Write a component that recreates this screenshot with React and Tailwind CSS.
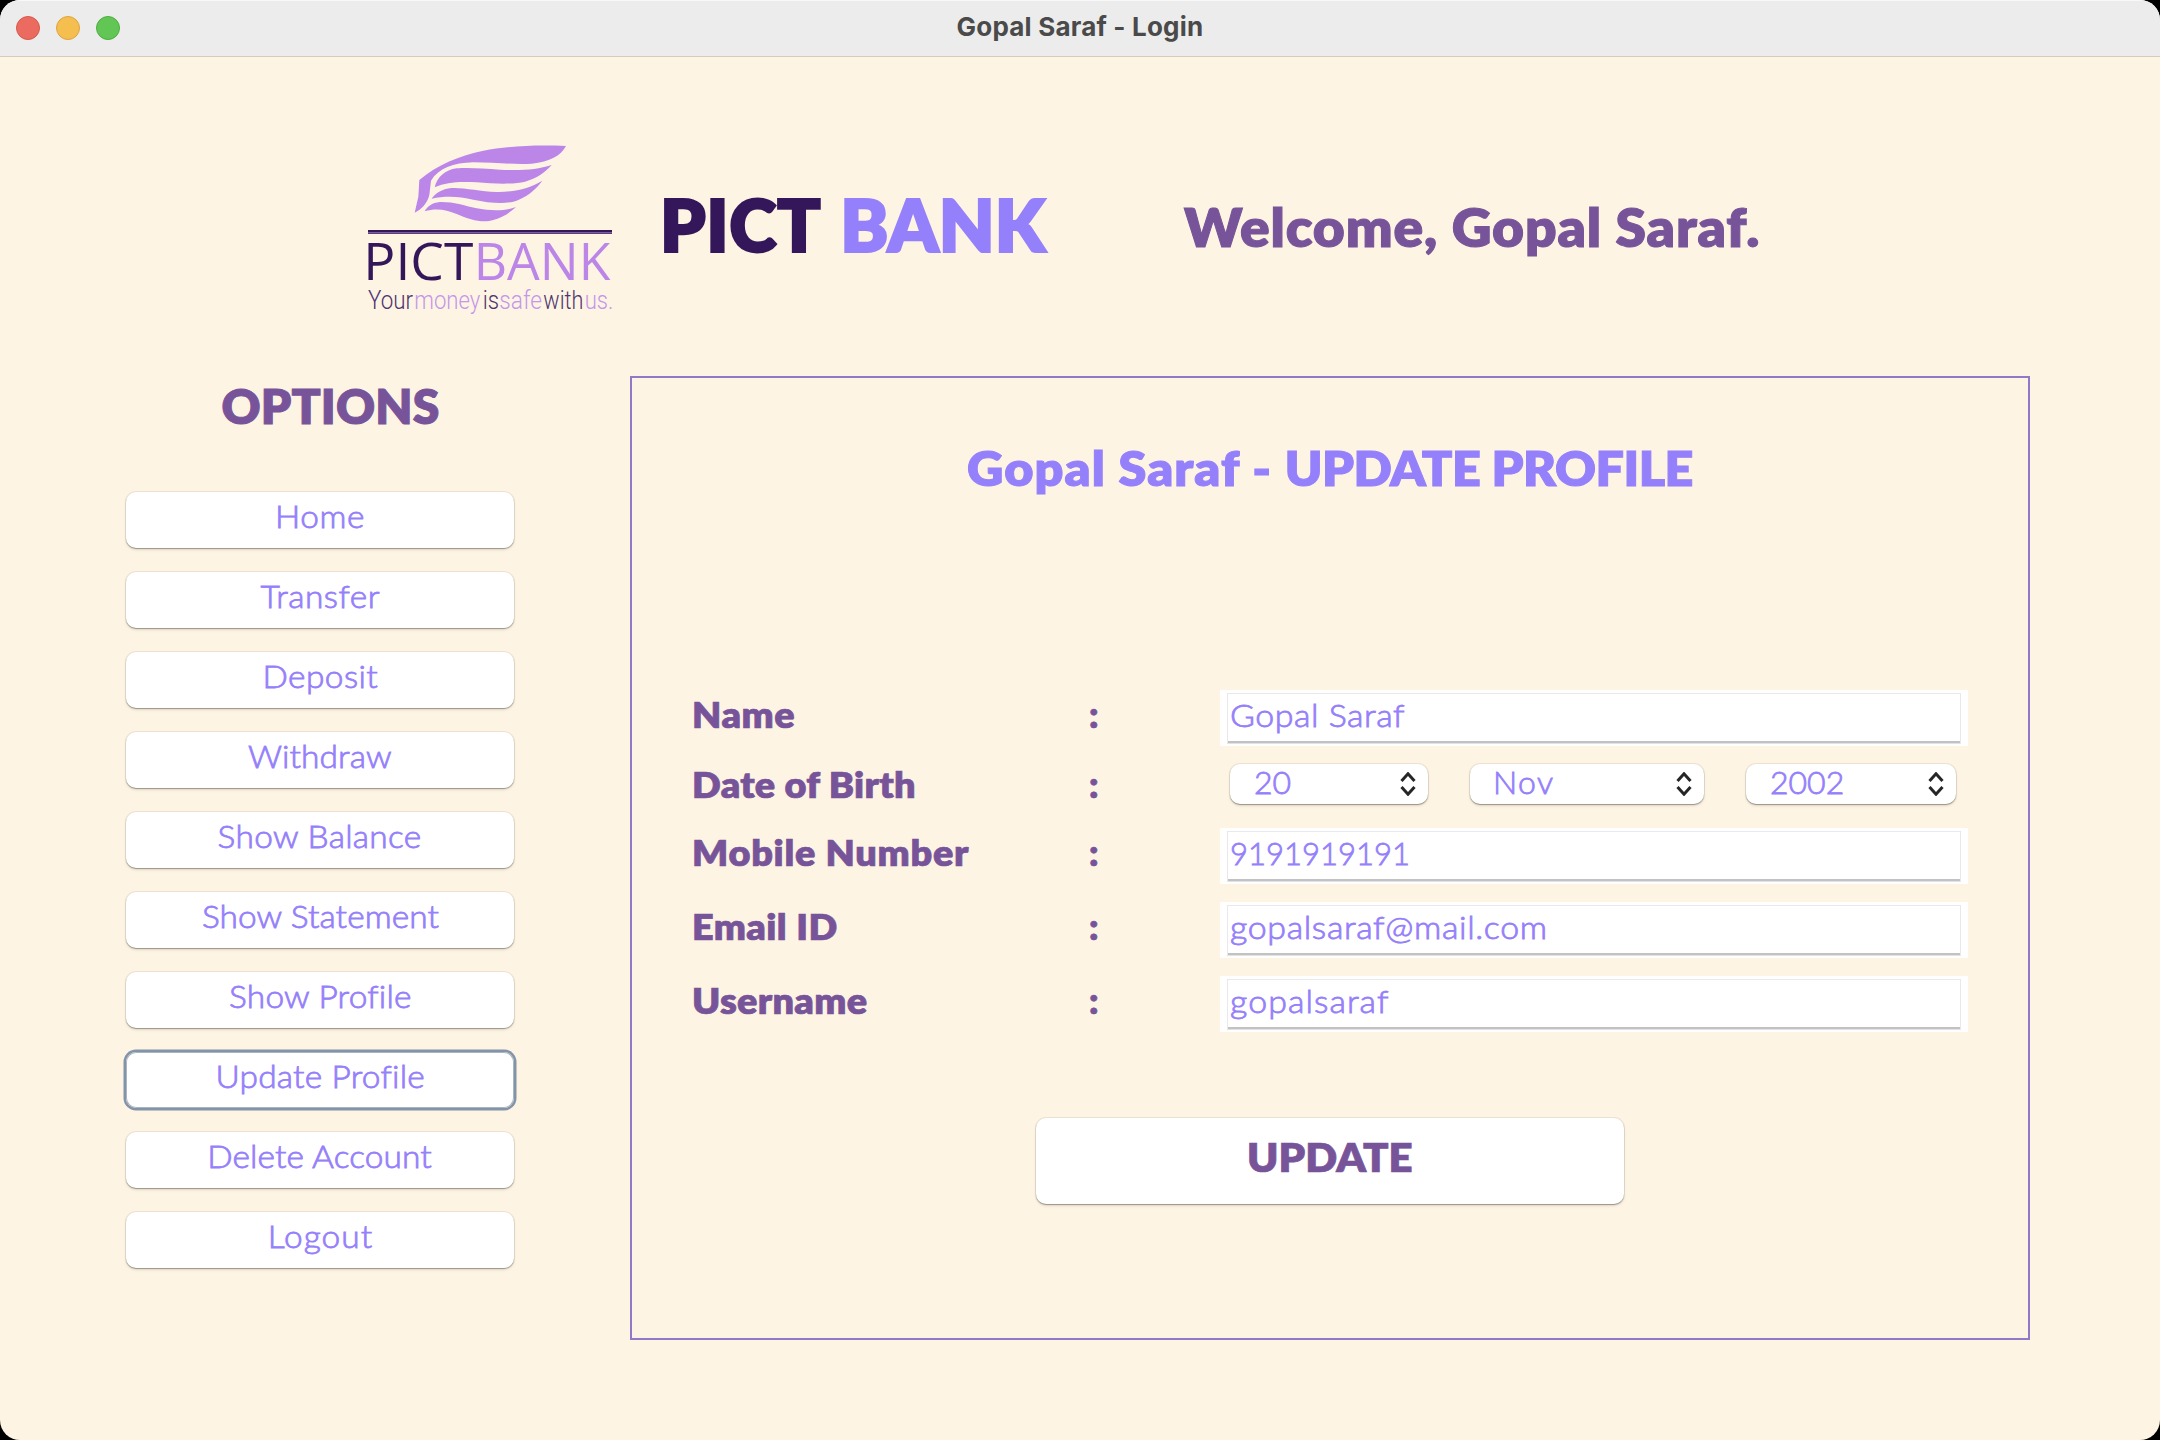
import React from "react";

const OPTIONS = [
  { label: "Home", fit: "tracking-[0.5px]" },
  { label: "Transfer", fit: "tracking-[0.5px]" },
  { label: "Deposit", fit: "tracking-[0.4px]" },
  { label: "Withdraw", fit: "tracking-[0.1px]" },
  { label: "Show Balance", fit: "tracking-[0.3px]" },
  { label: "Show Statement", fit: "tracking-[0.1px]" },
  { label: "Show Profile", fit: "tracking-[0.2px]" },
  { label: "Update Profile", fit: "tracking-[0.2px]", selected: true },
  { label: "Delete Account", fit: "tracking-[0.1px]" },
  { label: "Logout", fit: "tracking-[1px]" },
];

const CONTROL_SHADOW =
  "shadow-[0_0_0_1px_rgba(0,0,0,0.07),0_1px_1px_rgba(0,0,0,0.28),0_2px_3px_rgba(0,0,0,0.1)]";

function TitleBar() {
  return (
    <header className="grid h-[57px] grid-cols-[1fr_auto_1fr] items-center border-t border-b border-t-[#f8f8f8] border-b-[#d6cbb9] bg-[#ececec] px-4 pb-px">
      <div className="flex gap-4">
        <span className="size-6 rounded-full border border-[#d8574c] bg-[#ec6b60]" />
        <span className="size-6 rounded-full border border-[#dba43f] bg-[#f5bf4f]" />
        <span className="size-6 rounded-full border border-[#4fac40] bg-[#62c655]" />
      </div>
      <h1 className="-mt-[2px] font-['Inter',sans-serif] text-[26px] leading-none font-bold tracking-[0.2px] text-[#4a4a4a]">
        Gopal Saraf - Login
      </h1>
      <div />
    </header>
  );
}

function Logo() {
  return (
    <svg viewBox="0 0 840 600" className="h-[200px] w-[280px] shrink-0">
      <g fill="#bb86e8">
        <path d="M648 48C560 44 470 48 400 62C330 76 260 105 208 150L205 200L194 248C215 238 232 220 238 195L243 152C265 116 310 98 370 97C430 97 490 104 545 101C600 95 632 78 648 48Z" />
        <path d="M605 105C560 120 510 122 450 119C400 115 350 112 320 115C285 120 262 140 254 172C290 155 330 154 380 157C430 161 490 164 525 155C560 145 585 128 605 105Z" />
        <path d="M577 152C540 175 490 187 440 186C390 184 340 172 305 174C275 177 255 190 245 206C290 196 330 200 370 209C420 219 470 225 505 210C540 194 560 175 577 152Z" />
        <path d="M498 231C460 245 420 242 380 235C340 226 310 215 270 216C245 218 232 230 224 244C260 233 290 240 320 252C360 270 400 280 430 270C460 262 480 247 498 231Z" />
      </g>
      <rect x="54" y="300" width="732" height="7" fill="#34175a" />
      <rect x="54" y="307" width="732" height="5" fill="#5b3d80" />
      <g fontFamily="'Open Sans', sans-serif" fontSize="156" fontWeight="400">
        <text x="40" y="449" fill="#34175a" textLength="330" lengthAdjust="spacingAndGlyphs">PICT</text>
        <text x="371" y="449" fill="#bb86e8" textLength="410" lengthAdjust="spacingAndGlyphs">BANK</text>
      </g>
      <g fontFamily="Roboto, sans-serif" fontSize="76" fontWeight="300">
        <g fill="#4d3570">
          <text x="54" y="536" textLength="135" lengthAdjust="spacingAndGlyphs">Your</text>
          <text x="398" y="536" textLength="49" lengthAdjust="spacingAndGlyphs">is</text>
          <text x="580" y="536" textLength="120" lengthAdjust="spacingAndGlyphs">with</text>
        </g>
        <g fill="#c497ea">
          <text x="193" y="536" textLength="198" lengthAdjust="spacingAndGlyphs">money</text>
          <text x="448" y="536" textLength="128" lengthAdjust="spacingAndGlyphs">safe</text>
          <text x="704" y="536" textLength="86" lengthAdjust="spacingAndGlyphs">us.</text>
        </g>
      </g>
    </svg>
  );
}

function OptionButton({ label, fit, selected }) {
  return (
    <button
      className={
        "flex h-14 w-[388px] justify-center rounded-[10px] bg-white pt-[8px] text-[32px] leading-none font-light text-[#9580fb] [-webkit-text-stroke:0.8px_#9580fb] " +
        (selected ? "shadow-[0_0_0_2.5px_#8494a8,inset_0_0_0_1px_#a9b4c2]" : CONTROL_SHADOW)
      }
    >
      <span className={"inline-block scale-x-[1.045] " + fit}>{label}</span>
    </button>
  );
}

function Row({ label, className, fit, children }) {
  return (
    <div className={"flex " + className}>
      <div className="w-[397px] pt-[6px]">
        <span className={"inline-block origin-left scale-x-[1.05] text-[36px] leading-none whitespace-nowrap " + fit}>{label}</span>
      </div>
      <div className="w-[131px] pt-[6px] text-[36px] leading-none">:</div>
      {children}
    </div>
  );
}

function Field({ value, fit }) {
  return (
    <div className="h-14 w-[748px] bg-white px-[7px] pt-[3px] pb-[2px] text-[#9580fb]">
      <div className="h-full border border-[#e9e9e9] border-b-[#e2e2e2] bg-white">
        <div className="h-full border-b-2 border-[#c2c2c2] pt-[5px] pl-0.5 text-[32px] leading-none font-light [-webkit-text-stroke:0.8px_#9580fb]">
          <span className={"inline-block origin-left " + fit}>{value}</span>
        </div>
      </div>
    </div>
  );
}

function Select({ value, className }) {
  return (
    <div
      className={
        "flex h-10 items-center justify-between rounded-[10px] bg-white text-[32px] leading-none font-light text-[#9580fb] [-webkit-text-stroke:0.8px_#9580fb] " +
        CONTROL_SHADOW + " " + className
      }
    >
      <span className="-mt-[5px]">{value}</span>
      <svg viewBox="0 0 16 24" className="h-6 w-4" fill="none" stroke="#262626" strokeWidth="3" strokeLinecap="butt">
        <path d="M1.5 9L8 1.8L14.5 9M1.5 15L8 22.2L14.5 15" />
      </svg>
    </div>
  );
}

export default function App() {
  return (
    <div className="h-[1440px] w-[2160px] overflow-hidden bg-black">
      <div className="flex h-full flex-col overflow-hidden rounded-[20px] bg-[#fef4e3] font-['Lato',sans-serif] font-extrabold text-[#775499]">
        <TitleBar />

        <section className="mt-[73px] flex pl-[350px] [-webkit-text-stroke:1px_currentColor]">
          <div className="[-webkit-text-stroke:0]"><Logo /></div>
          <h2 className="ml-[30px] flex w-[524px] gap-[19px] pt-[58px] text-[72px] leading-none [-webkit-text-stroke:2px_currentColor]">
            <span className="tracking-[0.5px] text-[#34175a]">PICT</span>
            <span className="text-[#9580fb]">BANK</span>
          </h2>
          <p className="origin-left scale-x-[1.06] pt-[71px] text-[52px] leading-none tracking-[0.8px]">
            Welcome, Gopal Saraf.
          </p>
        </section>

        <main className="mt-[46px] flex">
          <nav className="ml-[126px] flex w-[504px] flex-col gap-6">
            <h3 className="mt-[6px] mb-[38px] w-[409px] text-center text-[48px] leading-none tracking-[0.2px] [-webkit-text-stroke:1px_currentColor]">
              OPTIONS
            </h3>
            {OPTIONS.map((o) => (
              <OptionButton key={o.label} {...o} />
            ))}
          </nav>

          <section className="flex h-[964px] w-[1400px] flex-col border-2 border-[#9179c8] [-webkit-text-stroke:0.7px_currentColor]">
            <h3 className="mt-[66px] scale-x-[1.05] text-center text-[48px] leading-none text-[#9580fb] [-webkit-text-stroke:1px_currentColor]">
              <span className="tracking-[1px]">Gopal Saraf - </span>
              <span className="tracking-[-0.5px]">UPDATE PROFILE</span>
            </h3>
            <div className="mt-[198px] ml-[60px] flex flex-col">
              <Row label="Name" className="h-[70px]" fit="tracking-[0.5px]">
                <Field value="Gopal Saraf" fit="scale-x-[1.06] tracking-[0.5px]" />
              </Row>
              <Row label="Date of Birth" className="h-[68px]" fit="tracking-[0.3px]">
                <div className="flex pt-1 pl-[10px]">
                  <Select value="20" className="w-[198px] pr-[12px] pl-[24px]" />
                  <Select value="Nov" className="ml-[42px] w-[234px] pr-[12px] pl-[23px] tracking-[1.4px]" />
                  <Select value="2002" className="ml-[42px] w-[210px] pr-[12px] pl-[24px]" />
                </div>
              </Row>
              <Row label="Mobile Number" className="h-[74px]" fit="tracking-[0.7px]">
                <Field value="9191919191" fit="scale-x-[0.97] tracking-[0px]" />
              </Row>
              <Row label="Email ID" className="h-[74px]" fit="tracking-[0.4px]">
                <Field value="gopalsaraf@mail.com" fit="scale-x-[1.06] tracking-[0.6px]" />
              </Row>
              <Row label="Username" className="h-14" fit="tracking-[0.3px]">
                <Field value="gopalsaraf" fit="scale-x-[1.06] tracking-[1px]" />
              </Row>
            </div>
            <button className={"mt-[86px] flex h-[86px] w-[588px] justify-center self-center rounded-[10px] bg-white pt-[19px] text-[40px] leading-none " + CONTROL_SHADOW}>
              <span className="inline-block scale-x-[1.05]">UPDATE</span>
            </button>
          </section>
        </main>
      </div>
    </div>
  );
}
